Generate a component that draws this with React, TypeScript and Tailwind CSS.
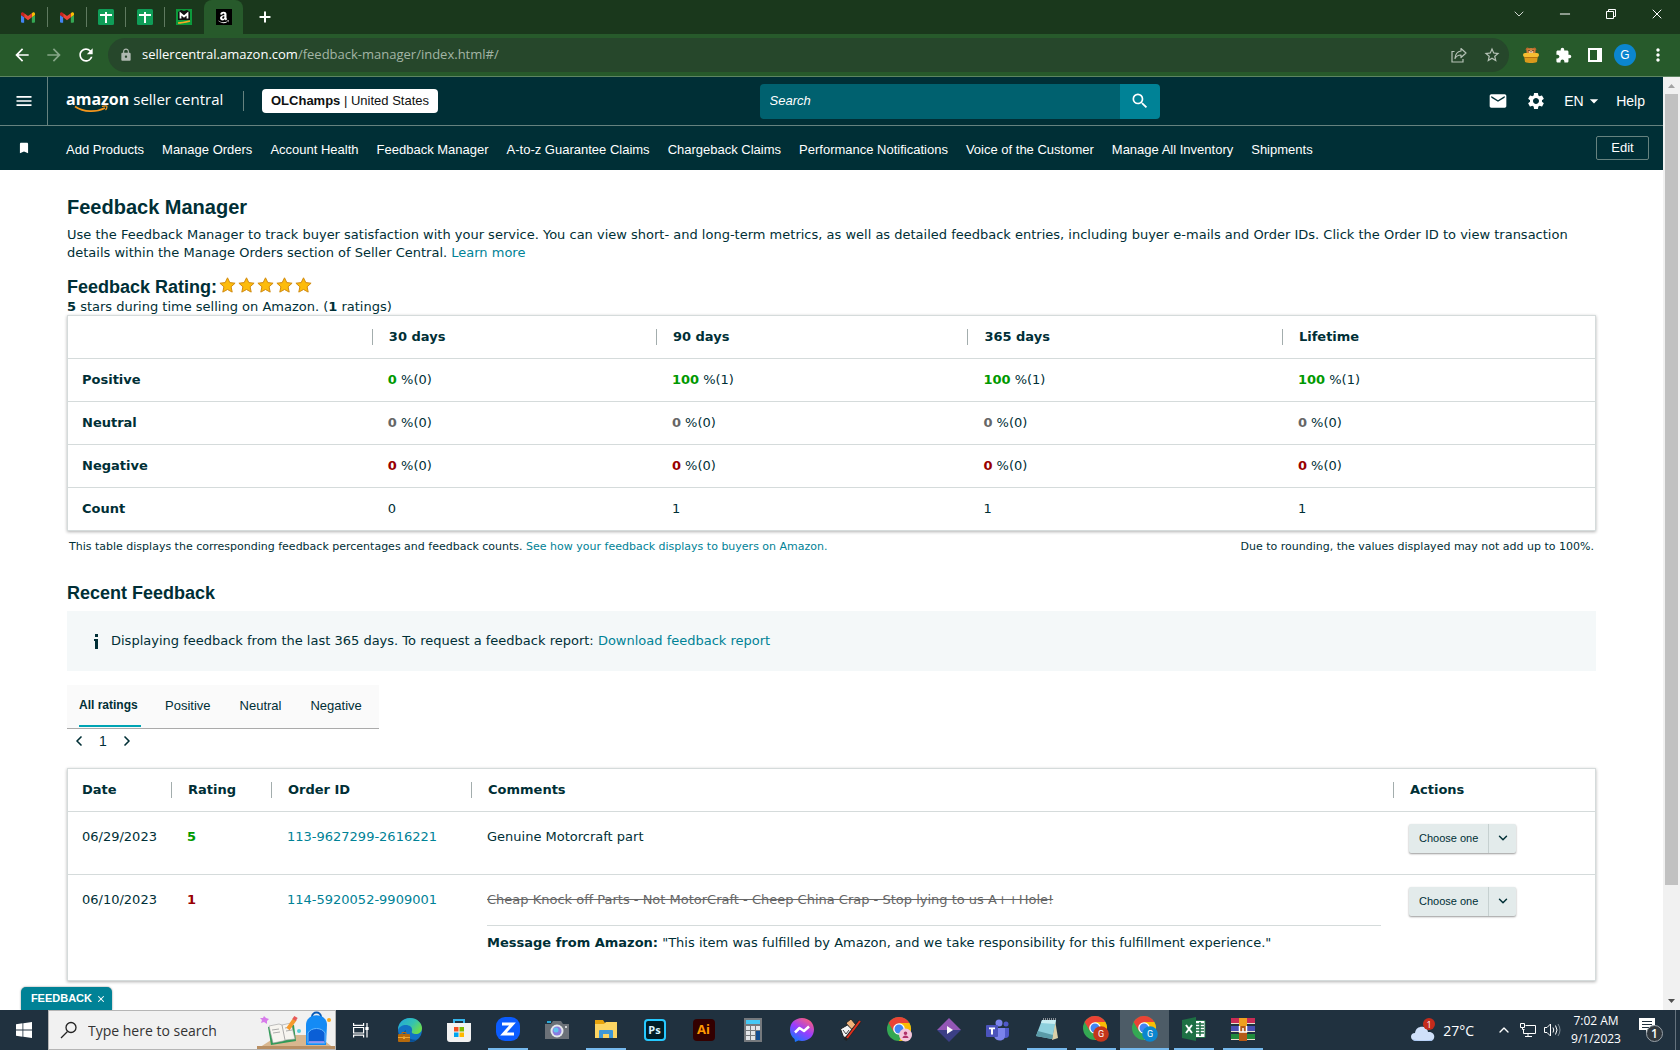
import type { ReactNode } from "react";
import { FaAmazon } from "react-icons/fa";
import {
  MdArrowBack,
  MdArrowDropDown,
  MdArrowForward,
  MdBookmark,
  MdExtension,
  MdLock,
  MdMail,
  MdMenu,
  MdMoreVert,
  MdRefresh,
  MdSearch,
  MdSettings,
  MdStarBorder,
} from "react-icons/md";
import { ChevronDown, ChevronLeft, ChevronRight, ChevronUp, Minus, Plus, X } from "lucide-react";

const GmailIcon = () => (
  <svg viewBox="0 0 24 18" className="w-[14px] h-[11px]">
    <path fill="#4285f4" d="M1.6 18h3.8V8.7L0 4.6v11.8C0 17.3.7 18 1.6 18z" />
    <path fill="#34a853" d="M18.6 18h3.8c.9 0 1.6-.7 1.6-1.6V4.6l-5.4 4.1z" />
    <path fill="#fbbc04" d="M18.6 1.6v7.1L24 4.6V2.5c0-2-2.3-3.2-3.9-2z" />
    <path fill="#ea4335" d="M5.4 8.7V1.6L12 6.5l6.6-4.9v7.1L12 13.6z" />
    <path fill="#c5221f" d="M0 2.5v2.1l5.4 4.1V1.6L3.9.5C2.3-.7 0 .5 0 2.5z" />
  </svg>
);

const SheetsIcon = () => (
  <svg viewBox="0 0 16 16" className="size-4">
    <rect width="16" height="16" rx="1.5" fill="#0f9d58" />
    <path fill="#fff" d="M2 5h5V3h2v2h5v2H9v7H7V7H2z" />
  </svg>
);

const ManagerIcon = () => (
  <svg viewBox="0 0 16 16" className="size-4">
    <rect width="16" height="16" fill="#0c9a3c" />
    <path fill="#111" d="M2 3l3-2 3 1 3-1 3 2v8H2z" />
    <path fill="none" stroke="#fff" strokeWidth="1.8" d="M4.5 9.500v-5L8 7.500l3.500-3v5" />
    <path fill="none" stroke="#f7a823" strokeWidth="1.4" d="M2 14c4 0 8-1 12-2" />
  </svg>
);

const AmazonIcon = () => (
  <span className="flex size-4 items-center justify-center bg-black text-white">
    <FaAmazon className="size-[13px]" />
  </span>
);

const tabs = [GmailIcon, GmailIcon, SheetsIcon, SheetsIcon, ManagerIcon];

const TabStrip = () => (
  <div className="flex h-[34px] items-stretch bg-[#1a381c] pl-[9px] text-white">
    {tabs.map((Icon, index) => (
      <button key={index} aria-label={`Tab ${index + 1}`} className="flex w-[39px] items-center">
        <span className="flex flex-1 justify-center">
          <Icon />
        </span>
        <span className={index < 4 ? "h-5 w-px bg-[#5f7a60]" : "w-px"} />
      </button>
    ))}
    <button aria-label="Seller Central" className="flex w-[39px] items-center justify-center rounded-t-lg bg-[#275a2b]">
      <AmazonIcon />
    </button>
    <button aria-label="New tab" className="flex w-11 items-center justify-center">
      <Plus className="size-4" strokeWidth={3} />
    </button>
    <div className="ml-auto flex h-[28px]">
      <button aria-label="Search tabs" className="flex w-[46px] items-center justify-center">
        <ChevronDown className="size-4" strokeWidth={1.2} />
      </button>
      <button aria-label="Minimize" className="flex w-[46px] items-center justify-center">
        <Minus className="size-4" strokeWidth={1.5} />
      </button>
      <button aria-label="Restore" className="flex w-[46px] items-center justify-center">
        <svg viewBox="0 0 10 10" className="size-[10px]" fill="none" stroke="currentColor">
          <path d="M.5 2.500h7v7h-7zM2.500 2.500v-2h7v7h-2" />
        </svg>
      </button>
      <button aria-label="Close" className="flex w-[46px] items-center justify-center">
        <X className="size-4" strokeWidth={1.5} />
      </button>
    </div>
  </div>
);

const BearIcon = () => (
  <svg viewBox="0 0 16 16" className="size-4">
    <circle cx="4.500" cy="2.200" r="1.700" fill="#b8672a" />
    <circle cx="11.500" cy="2.200" r="1.700" fill="#b8672a" />
    <path fill="#cf7c38" d="M3.500 7V4c0-4 9-4 9 0v3z" />
    <ellipse cx="8" cy="5" rx="2" ry="1.500" fill="#f2d3a8" />
    <path fill="#222" d="M5.500 3h1v1h-1zM9.500 3h1v1h-1zM7.500 4.300h1v1h-1z" />
    <path fill="#d99a1c" d="M1 8h14l-1 7c-3 1.300-9 1.300-12 0z" />
    <rect y="6" width="16" height="4" rx="2" fill="#f5bd31" />
    <path stroke="#a8660e" strokeWidth=".8" d="M1.500 10.500h13" />
  </svg>
);

const Toolbar = () => (
  <div className="flex h-[43px] items-center border-b border-[#5d8561] bg-[#275a2b] text-white">
    <div className="flex w-[108px] items-center gap-3 pl-3">
      <button aria-label="Back"><MdArrowBack className="size-5" /></button>
      <button aria-label="Forward"><MdArrowForward className="size-5 text-[#86a688]" /></button>
      <button aria-label="Reload"><MdRefresh className="size-5" /></button>
    </div>
    <div className="flex h-[34px] flex-1 items-center rounded-full bg-[#26472b] pr-2 pl-[11px] font-['Open_Sans',sans-serif] text-[13px]">
      <MdLock className="mr-[9px] size-[14px] text-[#aeb8b0]" />
      <span>sellercentral.amazon.com</span>
      <span className="text-[#a3b5a5]">/feedback-manager/index.html#/</span>
      <button aria-label="Share" className="mr-4 ml-auto text-[#b5c2b6]">
        <svg viewBox="0 0 16 16" className="size-4" fill="none" stroke="currentColor" strokeWidth="1.200">
          <path d="M3.500 4.500H1v10.500h11v-3" />
          <path strokeLinejoin="round" d="M10 1.500l5 4.500-5 4.500V8C7 8 5.300 9 4 11.500 4.300 7.500 6.500 4.500 10 4z" />
        </svg>
      </button>
      <button aria-label="Bookmark this page"><MdStarBorder className="size-[18px] text-[#b5c2b6]" /></button>
    </div>
    <div className="flex items-center gap-3 pr-3 pl-[14px]">
      <button aria-label="Bear extension"><BearIcon /></button>
      <button aria-label="Extensions" className="ml-1"><MdExtension className="size-[17px]" /></button>
      <button aria-label="Side panel" className="ml-1">
        <svg viewBox="0 0 14 14" className="size-[14px]">
          <path fill="none" stroke="#fff" strokeWidth="2" d="M1 1h12v12H1z" />
          <path fill="#fff" d="M9 0h5v14H9z" />
        </svg>
      </button>
      <button className="flex size-[22px] items-center justify-center rounded-full bg-[#0b86cf] text-xs">G</button>
      <button aria-label="Menu"><MdMoreVert className="size-5" /></button>
    </div>
  </div>
);

const SellerLogo = () => (
  <a href="#home" aria-label="amazon seller central" className="flex w-[177px] flex-col font-['Open_Sans',sans-serif] leading-5">
    <span className="flex items-baseline gap-1">
      <span className="text-[16px] font-bold">amazon</span>
      <span className="text-[15px]">seller central</span>
    </span>
    <svg viewBox="0 0 36 8" className="-mt-1 ml-2 h-2 w-9" fill="none" stroke="#f7981d">
      <path strokeWidth="1.800" d="M1 1.500c9 6 21 6 30 1.500" />
      <path strokeWidth="1.200" d="M28 1.500c3-1 5-.8 5 0s-.5 2.500-1.500 3.500" />
    </svg>
  </a>
);

const Header = () => (
  <header className="flex h-[49px] items-center border-b border-[#66827f] bg-[#002f36] text-white">
    <button aria-label="Open menu" className="flex h-full w-12 items-center justify-center border-r border-[#66827f]">
      <MdMenu className="size-5" />
    </button>
    <div className="flex flex-[10] items-center pl-[18px]">
      <SellerLogo />
      <span className="h-5 w-px bg-[#66827f]" />
      <button className="ml-[18px] h-6 w-44 rounded-sm bg-white text-[13px] whitespace-nowrap text-[#0f1111]">
        <b>OLChamps</b> | United States
      </button>
    </div>
    <form role="search" className="flex h-[35px] w-[400px] items-stretch">
      <input
        type="text"
        aria-label="Search"
        placeholder="Search"
        className="min-w-0 flex-1 rounded-l-sm bg-[#00616f] px-[10px] text-[13px] italic placeholder:text-white"
      />
      <button type="button" aria-label="Submit search" className="flex w-10 items-center justify-center rounded-r-sm bg-[#008296]">
        <MdSearch className="size-5" />
      </button>
    </form>
    <div className="flex flex-[7] items-center justify-end pr-[18px] text-[14px]">
      <button aria-label="Messages" className="mr-[18px]"><MdMail className="size-5" /></button>
      <button aria-label="Settings" className="mr-[18px]"><MdSettings className="size-5" /></button>
      <select aria-label="Language" className="w-5 appearance-none text-[14px]">
        <option>EN</option>
      </select>
      <MdArrowDropDown className="mr-3 size-5" />
      <a href="#help">Help</a>
    </div>
  </header>
);

const links = [
  "Add Products",
  "Manage Orders",
  "Account Health",
  "Feedback Manager",
  "A-to-z Guarantee Claims",
  "Chargeback Claims",
  "Performance Notifications",
  "Voice of the Customer",
  "Manage All Inventory",
  "Shipments",
];

const NavBar = () => (
  <nav className="flex h-[44px] items-center bg-[#002f36] text-[13px] text-white">
    <span className="flex w-12 justify-center">
      <MdBookmark className="size-[14px]" />
    </span>
    <div className="flex gap-[18px] pt-[3px] pl-[18px] whitespace-nowrap">
      {links.map((link) => (
        <a key={link} href="#nav">{link}</a>
      ))}
    </div>
    <button className="mr-[14px] ml-auto h-6 w-[53px] rounded-[2px] border border-[#66827f] leading-5">Edit</button>
  </nav>
);

const Star = () => (
  <svg viewBox="0 0 17 16" className="h-4 w-[17px]">
    <path
      fill="#fdbc0b"
      stroke="#d08a10"
      strokeLinejoin="round"
      d="M8.500 .8l2.300 4.800 5.300.6-4 3.600 1.100 5.300-4.700-2.600-4.700 2.600 1.100-5.300-4-3.600 5.300-.6z"
    />
  </svg>
);

const metrics = [
  { label: "Positive", tone: "text-[#090]", values: [[0, 0], [100, 1], [100, 1], [100, 1]] },
  { label: "Neutral", tone: "text-[#666]", values: [[0, 0], [0, 0], [0, 0], [0, 0]] },
  { label: "Negative", tone: "text-[#900]", values: [[0, 0], [0, 0], [0, 0], [0, 0]] },
];

const HeadCell = ({ children }: { children?: ReactNode }) => (
  <th scope="col" className="h-[42px] p-0 text-left font-bold">
    <div className="border-l border-[#a3adad] pl-4 leading-4">{children}</div>
  </th>
);

const RatingTable = () => (
  <div className="border border-[#d5dbdb] shadow-[0_1px_3px_rgba(0,0,0,0.3)]">
    <table className="w-full table-fixed">
      <colgroup>
        <col className="w-[19.9%]" />
        <col className="w-[18.6%]" />
        <col className="w-[20.4%]" />
        <col className="w-[20.6%]" />
        <col />
      </colgroup>
      <thead>
        <tr className="border-b border-[#d5dbdb]">
          <td />
          <HeadCell>30 days</HeadCell>
          <HeadCell>90 days</HeadCell>
          <HeadCell>365 days</HeadCell>
          <HeadCell>Lifetime</HeadCell>
        </tr>
      </thead>
      <tbody>
        {metrics.map((metric) => (
          <tr key={metric.label} className="h-[43px] border-b border-[#d5dbdb]">
            <th scope="row" className="pl-[14px] text-left font-bold">{metric.label}</th>
            {metric.values.map(([percent, count], index) => (
              <td key={index} className="pl-4">
                <b className={metric.tone}>{percent}</b> %({count})
              </td>
            ))}
          </tr>
        ))}
        <tr className="h-[43px]">
          <th scope="row" className="pl-[14px] text-left font-bold">Count</th>
          {[0, 1, 1, 1].map((count, index) => (
            <td key={index} className="pl-4">{count}</td>
          ))}
        </tr>
      </tbody>
    </table>
  </div>
);

const ActionSelect = ({ order }: { order: string }) => (
  <div className="relative w-[107px]">
    <select
      aria-label={`Action for order ${order}`}
      className="block h-[29px] w-full appearance-none rounded-[2px] bg-[#e3ebeb] pl-[10px] font-['Liberation_Sans',Arial,sans-serif] text-[11px] shadow-[0_1px_2px_rgba(0,0,0,0.4)]"
    >
      <option>Choose one</option>
    </select>
    <span className="pointer-events-none absolute inset-y-0 right-0 flex w-7 items-center justify-center border-l border-[#c6d0d0]">
      <ChevronDown className="size-[14px]" strokeWidth={2.5} />
    </span>
  </div>
);

const feedback = [
  { date: "06/29/2023", rating: 5, tone: "text-[#090]", order: "113-9627299-2616221", comment: "Genuine Motorcraft part" },
  {
    date: "06/10/2023",
    rating: 1,
    tone: "text-[#900]",
    order: "114-5920052-9909001",
    comment: "Cheap Knock off Parts - Not MotorCraft - Cheep China Crap - Stop lying to us A++Hole!",
    message: "\"This item was fulfilled by Amazon, and we take responsibility for this fulfillment experience.\"",
  },
];

const FeedbackTable = () => (
  <div className="border border-[#d5dbdb] shadow-[0_1px_3px_rgba(0,0,0,0.3)]">
    <table className="w-full table-fixed">
      <colgroup>
        <col className="w-[103px]" />
        <col className="w-[100px]" />
        <col className="w-[200px]" />
        <col />
        <col className="w-[202px]" />
      </colgroup>
      <thead>
        <tr className="border-b border-[#d5dbdb]">
          <th scope="col" className="pl-[14px] text-left font-bold">Date</th>
          <HeadCell>Rating</HeadCell>
          <HeadCell>Order ID</HeadCell>
          <HeadCell>Comments</HeadCell>
          <HeadCell>Actions</HeadCell>
        </tr>
      </thead>
      <tbody>
        {feedback.map((item) => (
          <tr key={item.order} className="border-b border-[#d5dbdb] align-top last:border-b-0">
            <td className="pt-4 pl-[14px]">{item.date}</td>
            <td className="pt-4 pl-4"><b className={item.tone}>{item.rating}</b></td>
            <td className="pt-4 pl-4"><a href="#order" className="text-[#008296]">{item.order}</a></td>
            <td className="pt-4 pr-3 pb-7 pl-4">
              {item.message ? (
                <>
                  <s className="text-[#666]">{item.comment}</s>
                  <p className="mt-4 border-t border-[#d5dbdb] pt-2"><b>Message from Amazon:</b> {item.message}</p>
                </>
              ) : (
                item.comment
              )}
            </td>
            <td className="pt-3 pl-4"><ActionSelect order={item.order} /></td>
          </tr>
        ))}
      </tbody>
    </table>
  </div>
);

const ratingTabs = ["Positive", "Neutral", "Negative"];

const Content = () => (
  <main className="flex-1 px-[67px] pt-[25px] font-['DejaVu_Sans',Verdana,sans-serif] text-[13px] leading-[18px] text-[#002f36]">
    <h1 className="font-['Liberation_Sans',Arial,sans-serif] text-[20px] leading-6 font-bold">Feedback Manager</h1>
    <p className="mt-[7px]">
      Use the Feedback Manager to track buyer satisfaction with your service. You can view short- and long-term metrics, as well
      as detailed feedback entries, including buyer e-mails and Order IDs. Click the Order ID to view transaction details within
      the Manage Orders section of Seller Central. <a href="#learn" className="text-[#008296]">Learn more</a>
    </p>

    <div className="mt-[13px] flex items-center gap-[2px]">
      <h2 className="font-['Liberation_Sans',Arial,sans-serif] text-[18px] leading-6 font-bold">Feedback Rating:</h2>
      <div className="flex gap-[2px] pb-1">
        {[1, 2, 3, 4, 5].map((star) => (
          <Star key={star} />
        ))}
      </div>
    </div>
    <p className="leading-4"><b>5</b> stars during time selling on Amazon. (<b>1</b> ratings)</p>
    <RatingTable />
    <div className="mt-[7px] flex justify-between px-[2px] text-[11px]">
      <p>
        This table displays the corresponding feedback percentages and feedback counts.{" "}
        <a href="#display" className="text-[#008296]">See how your feedback displays to buyers on Amazon.</a>
      </p>
      <p>Due to rounding, the values displayed may not add up to 100%.</p>
    </div>

    <h2 className="mt-[25px] font-['Liberation_Sans',Arial,sans-serif] text-[18px] leading-6 font-bold">Recent Feedback</h2>
    <div className="mt-[6px] flex h-[60px] items-center bg-[#f4f8f9] pl-[27px]">
      <svg viewBox="0 0 5 15" className="mr-3 h-[15px] w-[5px]" fill="#002f36">
        <path d="M1 0h3v3H1zM0 5h4v10H1V7H0z" />
      </svg>
      <p>
        Displaying feedback from the last 365 days. To request a feedback report:{" "}
        <a href="#report" className="text-[#008296]">Download feedback report</a>
      </p>
    </div>

    <div className="mt-[14px] flex h-[44px] w-fit gap-[29px] border-b border-[#aaa] bg-[#fafafa] pr-[17px] pl-3 font-['Liberation_Sans',Arial,sans-serif]">
      <button className="mr-[-5px] h-[42px] w-[62px] border-b-2 border-[#00a4b4] text-left text-[12px] font-bold whitespace-nowrap">All ratings</button>
      {ratingTabs.map((tab) => (
        <button key={tab} className="h-[42px]">{tab}</button>
      ))}
    </div>
    <div className="mb-[15px] flex h-6 items-center gap-3 pl-1 font-['Liberation_Sans',Arial,sans-serif] text-[14px]">
      <button aria-label="Previous page"><ChevronLeft className="size-4" strokeWidth={2.500} /></button>
      <button>1</button>
      <button aria-label="Next page"><ChevronRight className="size-4" strokeWidth={2.500} /></button>
    </div>
    <FeedbackTable />
  </main>
);

const Scrollbar = () => (
  <div className="flex w-[17px] flex-col items-center bg-[#f1f1f1]">
    <svg viewBox="0 0 17 17" className="size-[17px]"><path fill="#a3a3a3" d="M5 11l3.500-4 3.500 4z" /></svg>
    <div className="flex w-full flex-1 flex-col px-[2px]">
      <div className="h-[88%] bg-[#c1c1c1]" />
    </div>
    <svg viewBox="0 0 17 17" className="size-[17px]"><path fill="#505050" d="M5 6l3.500 4L12 6z" /></svg>
  </div>
);

const ChromeIcon = ({ badge, color }: { badge: string; color: string }) => (
  <svg viewBox="0 0 26 26" className="size-[26px]">
    <circle cx="12" cy="12" r="12" fill="#34a853" />
    <path fill="#ea4335" d="M1.600 6a12 12 0 0 1 20.800 0H12L7 15z" />
    <path fill="#fbbc04" d="M12 24a12 12 0 0 0 10.400-18H12l5.200 9z" />
    <circle cx="12" cy="12" r="5.800" fill="#fff" />
    <circle cx="12" cy="12" r="4.500" fill="#4285f4" />
    {badge ? (
      <>
        <circle cx="18" cy="18" r="7.800" fill={color} />
        <text x="18" y="21.200" textAnchor="middle" fontSize="9" fill="#fff" fontFamily="Roboto, sans-serif">{badge}</text>
      </>
    ) : (
      <>
        <circle cx="18.500" cy="18" r="6.500" fill={color} />
        <path fill="#b0306a" d="M18.500 14.500a1.800 1.800 0 0 1 0 3.600 1.800 1.800 0 0 1 0-3.600zM15.500 21c0-3.500 6-3.500 6 0z" />
      </>
    )}
  </svg>
);

const TaskViewIcon = () => (
  <svg viewBox="0 0 16 16" className="size-4" fill="none" stroke="#fff" strokeWidth="1.200">
    <path d="M.6 1v2.400h10V1M.6 15.500v-2.400h10v2.400M.6 5.500h10v5.500H.6zM14 1v14.500" />
    <path fill="#fff" d="M13 5.500h2v2h-2z" />
  </svg>
);

const EdgeIcon = () => (
  <svg viewBox="0 0 24 24" className="size-6">
    <defs>
      <linearGradient id="edge" x1="0" y1="0" x2="1" y2="0.6">
        <stop offset="0" stopColor="#1fa5e0" />
        <stop offset="0.600" stopColor="#35c2b0" />
        <stop offset="1" stopColor="#6bdc4e" />
      </linearGradient>
    </defs>
    <circle cx="12" cy="12" r="12" fill="#1272c4" />
    <path fill="url(#edge)" d="M0 12C0 5 5 0 12 0s12 5 12 10c0 4-3 6-6 6s-5-1-4-3c1-4-3-6-6-6-4 0-7 2-8 5z" />
    <path fill="#0b4f94" d="M8 12c-2 6 4 11 11 9.500-5 4.500-13 2-14-4 0-2.500 1-4.500 3-5.500z" />
    <rect y="16" width="12" height="8" rx="1" fill="#b5690c" />
    <path fill="none" stroke="#b5690c" d="M4 16v-1.500h4V16" />
    <path fill="#f0a530" d="M0 19h12v1H0zM5 18.500h2v2.500H5z" />
  </svg>
);

const StoreIcon = () => (
  <svg viewBox="0 0 24 24" className="size-6">
    <path fill="none" stroke="#35b5ec" strokeWidth="2" d="M7 6V2h10v4" />
    <path fill="#f2f2f2" d="M0 5h24v16q0 3-3 3H3q-3 0-3-3z" />
    <path fill="#f25022" d="M7 9h4.500v4.500H7z" />
    <path fill="#7fba00" d="M12.500 9H17v4.500h-4.500z" />
    <path fill="#00a4ef" d="M7 14.500h4.500V19H7z" />
    <path fill="#ffb900" d="M12.500 14.500H17V19h-4.500z" />
  </svg>
);

const ZoomIcon = () => (
  <svg viewBox="0 0 24 24" className="size-6">
    <rect width="24" height="24" rx="9" fill="#0b5cff" />
    <path fill="none" stroke="#fff" strokeWidth="3" d="M6 7h10.500L7.500 17H18" />
  </svg>
);

const CameraIcon = () => (
  <svg viewBox="0 0 24 24" className="size-6">
    <path fill="#29a8d8" d="M2 3h4v2H2z" />
    <path fill="#6b7178" d="M0 6h6l2-3h8l2 3h6v15H0z" />
    <circle cx="12" cy="13" r="6.500" fill="#e4e7ea" />
    <circle cx="12" cy="13" r="4.500" fill="#8a7be0" />
    <circle cx="11" cy="12" r="2.500" fill="#62c5ee" />
    <path fill="#cfd3d6" d="M20 8h2v2h-2z" />
  </svg>
);

const ExplorerIcon = () => (
  <svg viewBox="0 0 24 24" className="size-6">
    <path fill="#e8a30c" d="M1 3h8l2 3h12v4H1z" />
    <path fill="#fcd462" d="M1 7h9l2-2h11v16H1z" />
    <path fill="#3d97d8" d="M5 21v-7q0-1 1-1h12q1 0 1 1v7h-4v-4H9v4z" />
  </svg>
);

const PhotoshopIcon = () => (
  <span className="flex size-[22px] items-center justify-center rounded border-2 border-[#26c9ff] bg-[#001d26] text-[11px] font-bold text-[#d9f5ff]">Ps</span>
);

const IllustratorIcon = () => (
  <span className="flex size-[22px] items-center justify-center rounded bg-[#300] text-[13px] font-bold text-[#ff9a00]">Ai</span>
);

const CalculatorIcon = () => (
  <svg viewBox="0 0 18 24" className="h-6 w-[18px]">
    <path fill="#75797d" d="M0 0h18v24H0z" />
    <path fill="#44c8f5" d="M2 2h14v4H2z" />
    <path fill="#e2e5e8" d="M2 8h4v4H2zM7 8h4v4H7zM12 8h4v4h-4zM2 13h4v4H2zM7 13h4v4H7zM2 18h4v4H2zM7 18h4v4H7z" />
    <path fill="#114d91" d="M12 13h4v9h-4z" />
  </svg>
);

const MessengerIcon = () => (
  <svg viewBox="0 0 24 24" className="size-6">
    <defs>
      <linearGradient id="messenger" x1="0.200" y1="1" x2="0.800" y2="0">
        <stop offset="0" stopColor="#0a7cff" />
        <stop offset="0.500" stopColor="#9a3cff" />
        <stop offset="1" stopColor="#ff5f74" />
      </linearGradient>
    </defs>
    <path fill="url(#messenger)" d="M12 0c7 0 12 5 12 11.500S19 23 12 23c-1.300 0-2.500-.2-3.600-.5L5 24l-.5-3C1.700 19 0 15.500 0 11.500 0 5 5 0 12 0z" />
    <path fill="none" stroke="#fff" strokeWidth="2.500" strokeLinejoin="round" d="M5 14.500l4.500-4.500 4.500 3 5-4.500" />
  </svg>
);

const PaintIcon = () => (
  <svg viewBox="0 0 24 24" className="size-6">
    <path fill="#f0b27a" stroke="#222" d="M7 5l5-4 5 6-5 5z" />
    <path fill="#f4f4f4" stroke="#222" d="M1.500 11l7-4 5 5-4 8-5-1z" />
    <path fill="none" stroke="#444" d="M4 12l3 4 3-4" />
    <path stroke="#222" strokeWidth="3.500" d="M6 22L21 3" />
    <path stroke="#e0301e" strokeWidth="2" d="M8 20L21 3" />
  </svg>
);

const DiamondIcon = () => (
  <svg viewBox="0 0 24 24" className="size-6">
    <path fill="#9357b5" d="M12 0l12 12H0z" />
    <path fill="#3b3f85" d="M0 12h24L12 24z" />
    <path fill="#fff" d="M10 8l6 4-6 4z" />
  </svg>
);

const TeamsIcon = () => (
  <svg viewBox="0 0 24 24" className="size-6">
    <circle cx="13" cy="5" r="3.500" fill="#7b83eb" />
    <circle cx="20" cy="6" r="2.500" fill="#5059c9" />
    <path fill="#5059c9" d="M15 10h8v7c0 3-4 4-6 2z" />
    <path fill="#7b83eb" d="M8 10h11v8c0 6-10 6-11 0z" />
    <rect y="7" width="12" height="12" rx="1" fill="#4b53bc" />
    <path fill="#fff" d="M3 9.500h6v1.700H7v5.300H5v-5.300H3z" />
  </svg>
);

const NotepadIcon = () => (
  <svg viewBox="0 0 24 24" className="size-6">
    <path fill="#d9cfa8" d="M20 3l3 18-6 2z" />
    <path fill="#8ed0dd" d="M7 3h14l-4 19L1 19z" />
    <path fill="#c9edf2" d="M7 3h14l-1 4L6 6z" />
    <path fill="#5a9ba8" d="M3 14l15 4-1 4L1 19z" />
    <path stroke="#eee" strokeDasharray="1 1" d="M8 2h13" />
  </svg>
);

const ExcelIcon = () => (
  <svg viewBox="0 0 24 24" className="size-6">
    <path fill="#fff" stroke="#1d7044" d="M12 3.500h11v17H12z" />
    <path stroke="#1d7044" strokeWidth="1.500" d="M14 7h8M14 10h8M14 13h8M14 16h8M18 5v14" />
    <path fill="#1d7044" d="M0 3l14-3v24L0 21z" />
    <path stroke="#fff" strokeWidth="2" d="M4 8l6 8M10 8l-6 8" />
  </svg>
);

const WinrarIcon = () => (
  <svg viewBox="0 0 24 24" className="size-6">
    <path fill="#c92c55" d="M0 1h24v6H0z" />
    <path fill="#4a4fb5" d="M0 9h24v6H0z" />
    <path fill="#1f8a3c" d="M0 17h24v6H0z" />
    <path fill="#e8e0d0" d="M0 6h24v1H0zM0 14h24v1H0zM0 22h24v1H0z" />
    <path fill="#b55a17" d="M8 3h8v21H8z" />
    <path fill="#f0a020" d="M8 1h8v8H8z" />
    <path fill="none" stroke="#fff" strokeWidth="1.500" d="M8.500 9v6h7V9M12 11v4" />
  </svg>
);

const apps: { name: string; icon: ReactNode; open?: boolean; active?: boolean }[] = [
  { name: "Task view", icon: <TaskViewIcon /> },
  { name: "Edge", icon: <EdgeIcon /> },
  { name: "Microsoft Store", icon: <StoreIcon /> },
  { name: "Zoom", icon: <ZoomIcon />, open: true },
  { name: "Camera", icon: <CameraIcon /> },
  { name: "File Explorer", icon: <ExplorerIcon />, open: true },
  { name: "Photoshop", icon: <PhotoshopIcon /> },
  { name: "Illustrator", icon: <IllustratorIcon /> },
  { name: "Calculator", icon: <CalculatorIcon /> },
  { name: "Messenger", icon: <MessengerIcon /> },
  { name: "Paint", icon: <PaintIcon /> },
  { name: "Chrome", icon: <ChromeIcon badge="" color="#f3c6dc" /> },
  { name: "Media player", icon: <DiamondIcon /> },
  { name: "Teams", icon: <TeamsIcon /> },
  { name: "Notepad", icon: <NotepadIcon />, open: true },
  { name: "Chrome work", icon: <ChromeIcon badge="G" color="#c5361b" />, open: true },
  { name: "Chrome personal", icon: <ChromeIcon badge="G" color="#0b86cf" />, open: true, active: true },
  { name: "Excel", icon: <ExcelIcon />, open: true },
  { name: "WinRAR", icon: <WinrarIcon />, open: true },
];

const SearchArt = () => (
  <svg viewBox="0 0 78 38" className="h-[38px] w-[78px]">
    <path fill="#d9b78f" d="M0 38l22-14h38l18 14z" />
    <path fill="#b98f63" d="M0 35h78v3H0z" />
    <path fill="#d77bea" d="M7 5l2 2 3 1-2 2v3l-3-2-3 1 1-3-2-2h3z" />
    <path fill="#2e9b57" d="M14 34l-3-18 26-2 2 16z" />
    <path fill="#f7f5f0" stroke="#9a9a9a" strokeWidth=".6" d="M12 15l10-2 3 1 9-2 4 16-9 1-3 1-10 2z" />
    <path stroke="#999" strokeWidth=".8" d="M25 14l3 15M15 19l7-1M16 22l7-1M28 17l6-1M29 20l6-1" />
    <path stroke="#f59a2c" strokeWidth="4" d="M31 18l7-10" />
    <path stroke="#e65a5a" strokeWidth="4" d="M37 9l2-3" />
    <circle cx="42" cy="20" r="2" fill="#56cdd8" />
    <circle cx="72" cy="9" r="2" fill="#f7a91e" />
    <path fill="none" stroke="#0a5ab5" strokeWidth="2" d="M55 6c0-6 9-6 9 0" />
    <path fill="#148bf5" d="M49 14c0-13 21-13 21 0l-1 20H49z" />
    <path fill="#0a5fd6" stroke="#66b8ff" d="M51 32V22c3-6 14-6 17 0v10z" />
    <path stroke="#b59cf5" strokeWidth="1.500" d="M52 31h15" />
  </svg>
);

const Taskbar = () => (
  <footer className="flex h-10 items-stretch bg-[#20313f] font-['Open_Sans',sans-serif] text-white">
    <button aria-label="Start" className="flex w-12 items-center justify-center">
      <svg viewBox="0 0 16 16" className="size-4" fill="#fff">
        <path d="M0 2.200l6.500-.9v6.200H0zM7.300 1.200L16 0v7.500H7.300zM0 8.400h6.500v6.300L0 13.800zM7.300 8.400H16V16l-8.700-1.200z" />
      </svg>
    </button>
    <div className="flex w-[288px] items-center border border-[#b5b5b5] bg-[#f1f1f1] pl-[11px] text-[#222]">
      <svg viewBox="0 0 18 18" className="size-[18px] shrink-0" fill="none" stroke="#222" strokeWidth="1.300">
        <circle cx="11" cy="6.500" r="5" />
        <path d="M7.500 10.500L1 17" />
      </svg>
      <input
        type="text"
        aria-label="Type here to search"
        placeholder="Type here to search"
        className="ml-[10px] min-w-0 flex-1 text-[14px] placeholder:text-[#333]"
      />
      <SearchArt />
    </div>
    {apps.map((app) => (
      <button
        key={app.name}
        aria-label={app.name}
        className={app.active ? "flex w-[49px] flex-col items-center bg-[#4d5c67]" : "flex w-[49px] flex-col items-center"}
      >
        <span className="flex flex-1 items-center">{app.icon}</span>
        {app.open && <span className={app.active ? "h-[2px] w-full bg-[#76b9ed]" : "h-[2px] w-10 bg-[#76b9ed]"} />}
      </button>
    ))}
    <div className="ml-auto flex items-center">
      <svg viewBox="0 0 24 24" className="size-6">
        <path fill="#cfe0fa" d="M5 23c-7-1-6-8-1-8 1-8 12-8 13-1 8-1 8 9 2 9z" />
        <path fill="#a9c7f5" d="M2 21c4 2 16 2 20 0-1 2-2 2-3 2H5c-2 0-3-1-3-2z" />
        <circle cx="18" cy="6" r="6" fill="#c42b1c" />
        <text x="18" y="9.500" textAnchor="middle" fontSize="9" fill="#fff">1</text>
      </svg>
      <span className="ml-2 text-[14px]">27°C</span>
      <button aria-label="Show hidden icons" className="ml-[22px]"><ChevronUp className="size-4" strokeWidth={2} /></button>
      <svg viewBox="0 0 16 14" className="ml-2 h-[14px] w-4" fill="none" stroke="#fff">
        <path d="M5.500 2.500h10v8h-12v-4M8 10.500v3M5 13.500h7M.5.500h4v4h-4zM2.500 4.500v2h2" />
      </svg>
      <svg viewBox="0 0 17 14" className="ml-2 h-[14px] w-[17px]" fill="none" stroke="#fff">
        <path d="M.5 4.500h2.500l3.500-3.500v12L3 9.500H.5zM9 4.500q1.500 2.500 0 5M11.500 2.500q3 4.500 0 9" />
        <path stroke="#7c8a94" d="M14 1q4 6 0 12" />
      </svg>
      <div className="ml-[10px] w-[50px] text-center text-[12px] leading-[18px] whitespace-nowrap">
        7:02 AM
        <br />
        9/1/2023
      </div>
      <button aria-label="Notifications" className="mr-3 ml-[18px]">
        <svg viewBox="0 0 24 24" className="size-6">
          <path fill="#fff" d="M0 0h16v12h-6l-3 4v-4H0z" />
          <path stroke="#20313f" d="M3 3.500h10M3 6.500h10M3 9.500h7" />
          <circle cx="15.500" cy="15.500" r="8" fill="#30373d" stroke="#9aa3aa" />
          <text x="15.500" y="20" textAnchor="middle" fontSize="12" fontWeight="600" fill="#fff">1</text>
        </svg>
      </button>
      <span className="h-10 w-[5px] border-l border-[#65727d]" />
    </div>
  </footer>
);

const App = () => {
  return (
    <div className="flex h-screen flex-col bg-white font-['Liberation_Sans',Arial,sans-serif]">
      <TabStrip />
      <Toolbar />
      <div className="flex min-h-0 flex-1">
        <div className="relative flex min-w-0 flex-1 flex-col overflow-hidden">
          <Header />
          <NavBar />
          <Content />
          <button className="absolute bottom-0 left-[21px] flex h-[23px] w-[91px] items-center justify-end gap-1 rounded-t-[5px] bg-[#008296] pr-[6px] text-[11px] font-bold text-white shadow-[0_0_2px_rgba(0,0,0,0.5)]">
            FEEDBACK <X className="size-[10px]" strokeWidth={2.500} />
          </button>
        </div>
        <Scrollbar />
      </div>
      <Taskbar />
    </div>
  );
};

export default App;
